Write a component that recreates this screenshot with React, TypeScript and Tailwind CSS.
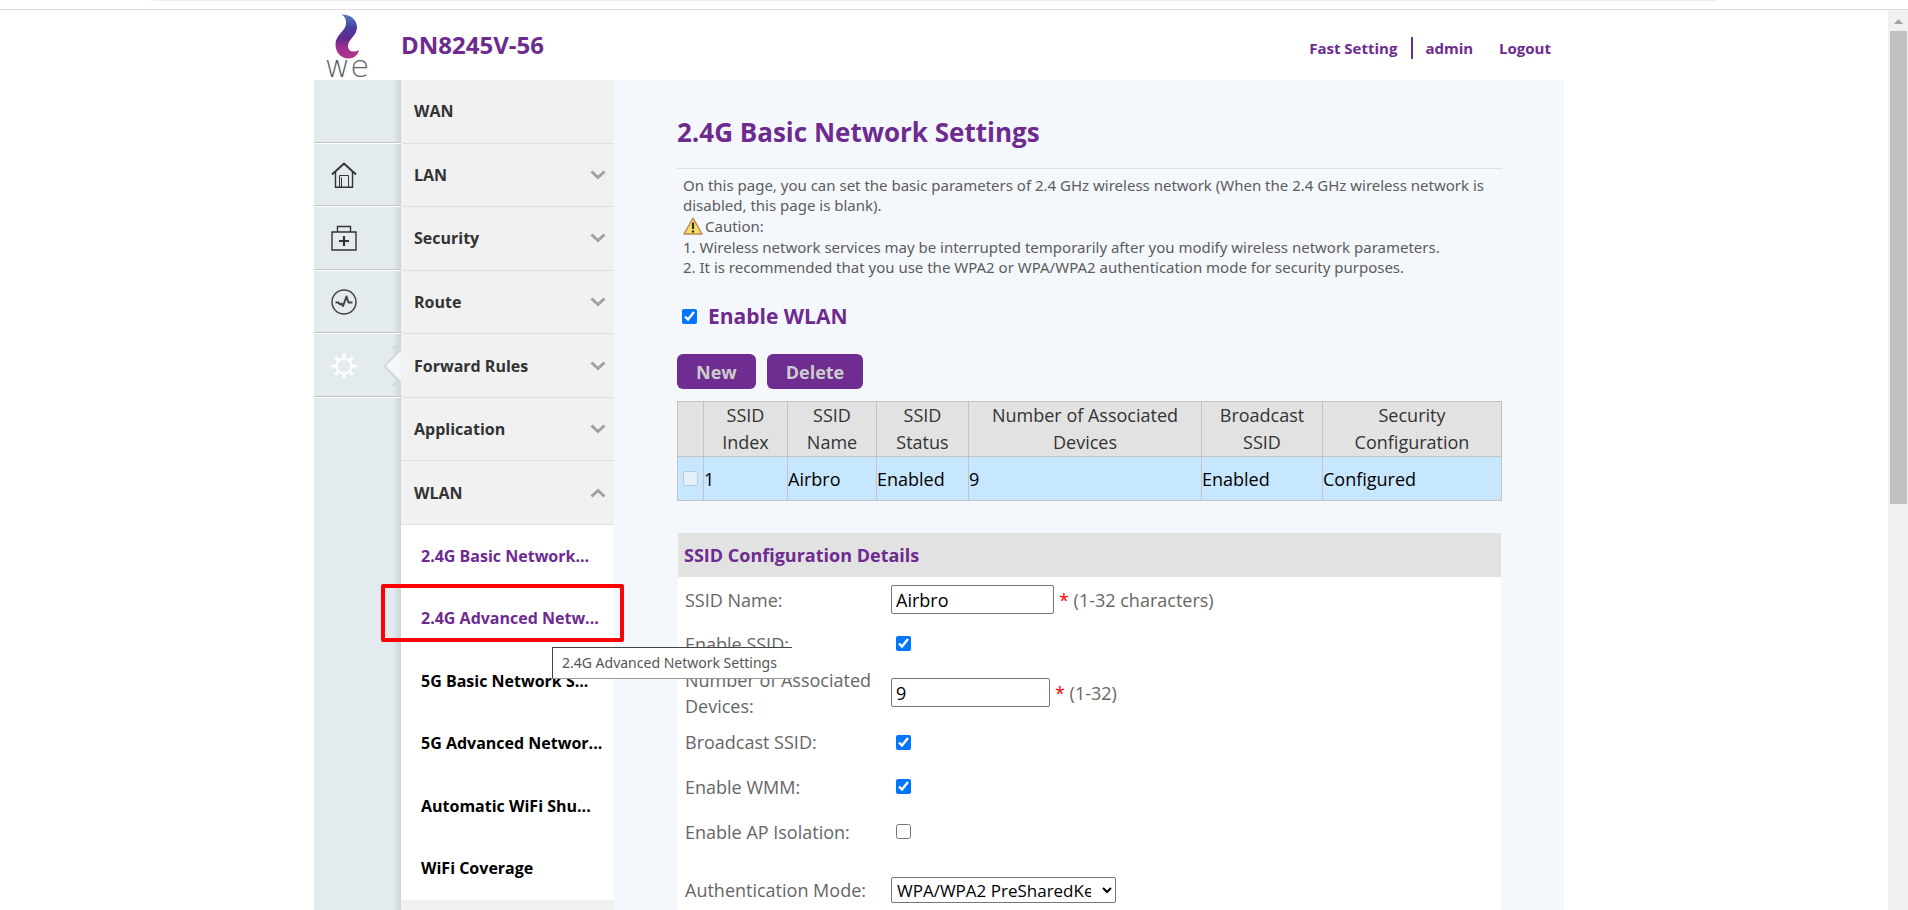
import type { ReactNode } from 'react'

const FONT = "font-['Open_Sans','Noto_Sans',sans-serif]"
const WIDE_FONT = "font-['Noto_Sans','Open_Sans',sans-serif]"

const menu = [
  { label: 'WAN', arrow: '' },
  { label: 'LAN', arrow: 'down' },
  { label: 'Security', arrow: 'down' },
  { label: 'Route', arrow: 'down' },
  { label: 'Forward Rules', arrow: 'down' },
  { label: 'Application', arrow: 'down' },
  { label: 'WLAN', arrow: 'up' },
]

const submenu = [
  { label: '2.4G Basic Network...', active: true },
  { label: '2.4G Advanced Netw...', active: true, hint: '2.4G Advanced Network Settings' },
  { label: '5G Basic Network S...', active: false },
  { label: '5G Advanced Networ...', active: false },
  { label: 'Automatic WiFi Shu...', active: false },
  { label: 'WiFi Coverage', active: false },
]

function Logo() {
  return (
    <div className="flex w-[44px] flex-col items-center" aria-label="we logo">
      <svg width="26" height="45" viewBox="0 0 26 45" aria-hidden="true">
        <defs>
          <linearGradient id="flame" x1="0" y1="0" x2="0" y2="1">
            <stop offset="0" stopColor="#5b7fc0" />
            <stop offset="0.3" stopColor="#453f9c" />
            <stop offset="0.55" stopColor="#65298f" />
            <stop offset="0.75" stopColor="#9a2f8e" />
            <stop offset="1" stopColor="#b5348c" />
          </linearGradient>
        </defs>
        <path
          d="M7.500 0.500C16 0 23 5.500 23 13C23 22 14.500 24.500 14 31.500C13.700 37 19 39.500 25 36C23.500 41.500 20 44.500 14.500 44.500C6.500 44.500 1.500 38 1.500 30.500C1.500 20.500 11 18 12 10C12.500 6 11 2.500 7.500 0.500Z"
          fill="url(#flame)"
        />
      </svg>
      <span className="font-['DejaVu_Sans',sans-serif] text-[31px] leading-[15px] font-extralight text-[#606166]">we</span>
    </div>
  )
}

function HomeIcon() {
  return (
    <svg width="26" height="26" viewBox="0 0 26 26" fill="none" stroke="#333" aria-hidden="true">
      <path d="M1 12.500L13 1.500L25 12.500" strokeWidth="2" />
      <path d="M4.500 10V25.300H21.500V10" strokeWidth="1.400" />
      <path d="M8.500 25V13.500H17.500V25M10.500 25V15.500" strokeWidth="1" />
    </svg>
  )
}

function KitIcon() {
  return (
    <svg width="26" height="26" viewBox="0 0 26 26" fill="none" stroke="#333" aria-hidden="true">
      <path d="M1 7H25V25H1ZM6.500 7V1.500H19.500V7" strokeWidth="1.400" />
      <path d="M13 11V21M8 16H18" strokeWidth="2.200" />
    </svg>
  )
}

function PulseIcon() {
  return (
    <svg width="26" height="26" viewBox="0 0 26 26" fill="none" stroke="#444" strokeLinejoin="round" aria-hidden="true">
      <circle cx="13" cy="13" r="12" strokeWidth="1.500" />
      <path d="M4.500 13.500H7.500L9 15.500L10.500 14.500L12 17L15.500 7.500L17.500 13.500H21.500" strokeWidth="2" />
    </svg>
  )
}

function GearIcon() {
  return (
    <svg width="26" height="26" viewBox="0 0 26 26" fill="none" stroke="#fff" aria-hidden="true">
      <circle cx="13" cy="13" r="7.500" strokeWidth="2.200" />
      <path
        d="M13 0.500V5M13 21V25.500M0.500 13H5M21 13H25.500M4.200 4.200L7.300 7.300M18.700 18.700L21.800 21.800M4.200 21.800L7.300 18.700M18.700 7.300L21.800 4.200"
        strokeWidth="3"
      />
    </svg>
  )
}

function Chevron({ up }: { up?: boolean }) {
  return (
    <svg width="16" height="10" viewBox="0 0 16 10" fill="none" stroke="#a0a0a5" strokeWidth="3" aria-hidden="true">
      <path d={up ? 'M1.500 8.500L8 2.500L14.500 8.500' : 'M1.500 1.500L8 7.500L14.500 1.500'} />
    </svg>
  )
}

function WarningIcon() {
  return (
    <svg width="20" height="18" viewBox="0 0 20 18" aria-hidden="true">
      <path d="M10 1L19 17H1Z" fill="#f8dc6c" stroke="#b58a4a" strokeWidth="1.400" strokeLinejoin="round" />
      <path d="M10 5.500V12" stroke="#3b2f10" strokeWidth="2.200" />
      <circle cx="10" cy="14.500" r="1.200" fill="#3b2f10" />
    </svg>
  )
}

function RailItem({ label, selected, children }: { label: string; selected?: boolean; children?: ReactNode }) {
  return (
    <li className="relative flex border-b border-white shadow-[inset_0_-1px_0_#bfc3cb]">
      {children && (
        <button type="button" aria-label={label} className="flex flex-1 items-center pl-[17px]">
          {children}
        </button>
      )}
      {selected && (
        <svg className="absolute top-[12px] right-0" width="18" height="40" viewBox="0 0 18 40" aria-hidden="true">
          <path d="M18 0H8L14 5L0 20L14 35L8 40H18Z" fill="#d3dade" />
          <path d="M18 5L3 20L18 35Z" fill="#f3f7fc" />
        </svg>
      )}
    </li>
  )
}

function Row({ id, label, height, children }: { id: string; label: string; height: string; children: ReactNode }) {
  return (
    <div className={`flex items-center pl-[7px] ${height}`}>
      <label htmlFor={id} className="w-[206px] shrink-0 pr-3 leading-[26px]">
        {label}
      </label>
      {children}
    </div>
  )
}

const field = 'h-[29px] rounded-[2px] border border-[#767676] bg-white px-1 text-black'
const check = 'ml-[5px] size-[15px]'
const cell = 'border border-[#c3c3c3]'

export default function App() {
  return (
    <div className={`flex h-screen flex-col overflow-hidden bg-white ${FONT}`}>
      <div className="h-[10px] shrink-0 border-b border-[#dcdcdc] pr-[10%] pl-[8%]">
        <div className="h-px bg-[#e8f1fc]" />
      </div>
      <div className="flex min-h-0 flex-1">
        <div className="flex min-w-0 flex-1 flex-col overflow-hidden pr-[10px]">
          <div className="mx-auto flex min-h-0 w-full max-w-[1250px] flex-1 flex-col">
            <header className="flex h-[70px] shrink-0 items-start pr-[13px] pl-[11px] text-[#6e2b8f]">
              <div className="pt-1">
                <Logo />
              </div>
              <h1 className="ml-8 pt-[19px] text-2xl leading-8 font-bold">DN8245V-56</h1>
              <nav className="ml-auto flex items-center pt-[27px] text-[15px] leading-[22px] font-bold">
                <a href="#fast-setting" className="border-r-2 border-[#6e2b8f] pr-[14px]">
                  Fast Setting
                </a>
                <a href="#admin" className="pl-3">
                  admin
                </a>
                <a href="#logout" className="pl-[26px]">
                  Logout
                </a>
              </nav>
            </header>

            <div className="flex min-h-0 flex-1">
              <div className="w-[87px] shrink-0 bg-linear-to-r from-[#e4ebee] from-90% to-[#cdd5da]">
                <ul className="grid h-[318px] grid-rows-5">
                  <RailItem label="" />
                  <RailItem label="Home">
                    <HomeIcon />
                  </RailItem>
                  <RailItem label="Maintenance">
                    <KitIcon />
                  </RailItem>
                  <RailItem label="Status">
                    <PulseIcon />
                  </RailItem>
                  <RailItem label="Advanced" selected>
                    <GearIcon />
                  </RailItem>
                </ul>
              </div>

              <nav className="w-[213px] shrink-0 bg-[#f1f1f1] text-base font-bold whitespace-nowrap">
                <ul className="grid h-[445px] grid-rows-7">
                  {menu.map((m) => (
                    <li key={m.label} className="flex border-b border-[#e0e0e0]">
                      <button type="button" className="flex flex-1 items-center justify-between pr-2 pl-[13px] text-[#333]">
                        {m.label}
                        {m.arrow && <Chevron up={m.arrow === 'up'} />}
                      </button>
                    </li>
                  ))}
                </ul>
                <ul className="grid h-[375px] grid-rows-6 bg-white">
                  {submenu.map((s) => (
                    <li key={s.label} className="relative flex items-center pb-px pl-5">
                      <a href="#wlan" className={s.active ? 'text-[#6e2b8f]' : 'text-black'}>
                        {s.label}
                      </a>
                      {s.hint && (
                        <>
                          <div className="absolute -top-1 -left-5 z-10 h-[58px] w-[243px] rounded-[2px] border-4 border-[#fc0204]" />
                          <div
                            role="tooltip"
                            className={`absolute top-[59px] left-[151px] z-10 w-[240px] border-t border-b border-l border-t-[#444] border-b-[#999] border-l-[#444] bg-white pl-[9px] text-sm leading-[30px] font-normal text-[#555] ${WIDE_FONT}`}
                          >
                            {s.hint}
                          </div>
                        </>
                      )}
                    </li>
                  ))}
                </ul>
              </nav>

              <main className="min-w-0 flex-1 bg-[#f4f8fd] pr-[62px] pl-[63px] text-lg text-[#666]">
                <h2 className="border-b border-[#dfe0e2] pt-[35px] pb-[19px] text-[26px] leading-[34px] font-bold text-[#6e2b8f]">
                  2.4G Basic Network Settings
                </h2>
                <div className={`pt-[6px] pl-[6px] text-[15px] leading-[20px] text-[#5c5c5c] ${WIDE_FONT}`}>
                  <p>
                    On this page, you can set the basic parameters of 2.4 GHz wireless network (When the 2.4 GHz wireless
                    network is disabled, this page is blank).
                  </p>
                  <p className="flex h-[22px] items-center gap-[2px]">
                    <WarningIcon />
                    Caution:
                  </p>
                  <p>1. Wireless network services may be interrupted temporarily after you modify wireless network parameters.</p>
                  <p>2. It is recommended that you use the WPA2 or WPA/WPA2 authentication mode for security purposes.</p>
                </div>

                <label className="mt-[25px] flex items-center gap-[11px] pl-[5px] text-[21px] leading-[28px] font-bold text-[#6e2b8f]">
                  <input type="checkbox" defaultChecked className="size-[15px]" />
                  Enable WLAN
                </label>

                <div className="mt-6 flex gap-[11px] font-bold text-[#ccc]">
                  <button type="button" className="h-[35px] rounded-md bg-[#6f2c91] px-[19px]">
                    New
                  </button>
                  <button type="button" className="h-[35px] rounded-md bg-[#6f2c91] px-[19px]">
                    Delete
                  </button>
                </div>

                <table className="mt-3 w-full table-fixed border-collapse">
                  <thead className="bg-[#e2e2e2] leading-[27px] text-[#333]">
                    <tr>
                      <th scope="col" aria-label="Select" className={`${cell} w-[26px]`} />
                      <th scope="col" className={`${cell} w-[84px] px-2 font-normal`}>SSID Index</th>
                      <th scope="col" className={`${cell} w-[89px] px-2 font-normal`}>SSID Name</th>
                      <th scope="col" className={`${cell} w-[92px] px-2 font-normal`}>SSID Status</th>
                      <th scope="col" className={`${cell} w-[233px] px-2 font-normal`}>Number of Associated Devices</th>
                      <th scope="col" className={`${cell} w-[121px] px-2 font-normal`}>Broadcast SSID</th>
                      <th scope="col" className={`${cell} px-2 font-normal`}>Security Configuration</th>
                    </tr>
                  </thead>
                  <tbody>
                    <tr className="h-[44px] bg-[#c7e6ff] text-black">
                      <td className={cell}>
                        <input type="checkbox" disabled aria-label="Select Airbro" className="mx-auto block size-[15px]" />
                      </td>
                      <td className={cell}>1</td>
                      <td className={cell}>Airbro</td>
                      <td className={cell}>Enabled</td>
                      <td className={cell}>9</td>
                      <td className={cell}>Enabled</td>
                      <td className={cell}>Configured</td>
                    </tr>
                  </tbody>
                </table>

                <section className="mt-8 mr-px ml-px bg-white pb-8">
                  <h3 className="bg-[#e2e2e2] pl-[6px] leading-[44px] font-bold text-[#6e2b8f]">SSID Configuration Details</h3>
                  <Row id="ssid-name" label="SSID Name:" height="h-[45px]">
                    <input id="ssid-name" defaultValue="Airbro" className={`${field} w-[163px]`} />
                    <span className="ml-[5px]">
                      <span className="text-[#f00]">*</span> (1-32 characters)
                    </span>
                  </Row>
                  <Row id="enable-ssid" label="Enable SSID:" height="h-[43px]">
                    <input id="enable-ssid" type="checkbox" defaultChecked className={check} />
                  </Row>
                  <Row id="devices" label="Number of Associated Devices:" height="h-[55px]">
                    <input id="devices" defaultValue="9" className={`${field} w-[159px]`} />
                    <span className="ml-[5px]">
                      <span className="text-[#f00]">*</span> (1-32)
                    </span>
                  </Row>
                  <Row id="broadcast" label="Broadcast SSID:" height="h-[44px]">
                    <input id="broadcast" type="checkbox" defaultChecked className={check} />
                  </Row>
                  <Row id="wmm" label="Enable WMM:" height="h-[45px]">
                    <input id="wmm" type="checkbox" defaultChecked className={check} />
                  </Row>
                  <Row id="isolation" label="Enable AP Isolation:" height="h-[45px]">
                    <input id="isolation" type="checkbox" className={check} />
                  </Row>
                  <Row id="auth" label="Authentication Mode:" height="h-[71px]">
                    <select
                      id="auth"
                      className="h-[26px] w-[225px] rounded-[2px] border border-[#767676] bg-white pr-2 pl-px text-[17px] text-black"
                    >
                      <option>WPA/WPA2 PreSharedKey</option>
                    </select>
                  </Row>
                </section>
              </main>
            </div>
          </div>
        </div>

        <div className="flex w-5 shrink-0 flex-col bg-[#f0f0f0] pr-px pl-0.5" aria-hidden="true">
          <svg className="mx-auto mt-[9px] mb-[7px] shrink-0" width="9" height="5" viewBox="0 0 9 5">
            <path d="M4.500 0L9 5H0Z" fill="#a3a3a3" />
          </svg>
          <div className="h-[52.5%] bg-[#c1c1c1]" />
        </div>
      </div>
    </div>
  )
}
